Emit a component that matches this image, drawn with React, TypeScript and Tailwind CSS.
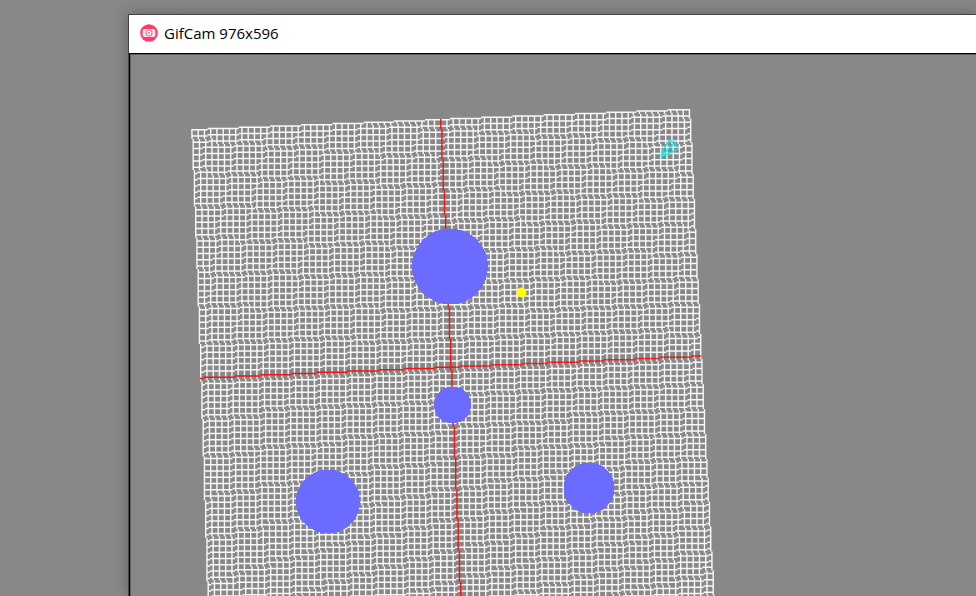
import React from 'react';

type Point = [number, number];

const CELLS = 40;
const UNIT = 1.25;
const LINE = 1.12;

// Maps a grid node (column, row) to a whole display unit, with a slight turn and perspective.
function project(col: number, row: number): Point {
  const u = col / CELLS;
  const v = row / CELLS;
  const x = 321.2 + 10.3 * v + u * (250 + 2 * v + 0.8 * v * v);
  const y = 313 + 248.5 * v + v * v - u * (10.9 + 0.7 * v);
  return [Math.floor(x / UNIT), Math.floor(y / UNIT)];
}

function hEdge([x0, y0]: Point, [x1, y1]: Point): string {
  if (y0 === y1) return `M${x0} ${y0}H${x1 + LINE}V${y0 + LINE}H${x0}Z`;
  const m = Math.floor((x0 + x1) / 2) + 1;
  return `M${x0} ${y0}H${m}V${y0 + LINE}H${x0}ZM${m} ${y1}H${x1 + LINE}V${y1 + LINE}H${m}Z`;
}

function vEdge([x0, y0]: Point, [x1, y1]: Point): string {
  if (x0 === x1) return `M${x0} ${y0}H${x0 + LINE}V${y1 + LINE}H${x0}Z`;
  const m = Math.floor((y0 + y1) / 2) + 1;
  return `M${x0} ${y0}H${x0 + LINE}V${m}H${x0}ZM${x1} ${m}H${x1 + LINE}V${y1 + LINE}H${x1}Z`;
}

function buildGrid() {
  let mesh = '';
  let axes = '';
  let ticks = '';
  for (let r = -CELLS; r <= CELLS; r++) {
    for (let c = -CELLS; c <= CELLS; c++) {
      const p = project(c, r);
      if (c < CELLS) {
        const edge = hEdge(p, project(c + 1, r));
        if (r === 0) axes += edge;
        else mesh += edge;
      }
      if (r < CELLS) {
        const edge = vEdge(p, project(c, r + 1));
        if (c === 0) axes += edge;
        else mesh += edge;
      }
      if (r === 0 && c > 0) ticks += `M${p[0]} ${p[1]}h1v1h-1Z`;
    }
  }
  return { mesh, axes, ticks };
}

const grid = buildGrid();

const bodies = [
  { x: 320, y: 212.5, r: 38 },
  { x: 322.5, y: 351, r: 18.5 },
  { x: 198, y: 447.5, r: 32 },
  { x: 459, y: 434, r: 25.5 },
];

function Simulation() {
  return (
    <svg className="block min-h-0 w-full flex-1" role="img" aria-label="Simulation grid">
      <g transform="scale(1.25)">
        <path d={grid.mesh} fill="#fff" opacity="0.95" />
        <path d={grid.axes} fill="#fa1010" />
        <path d={grid.ticks} fill="#fff" opacity="0.35" />
      </g>
      <g fill="#6b6bff" shapeRendering="crispEdges">
        {bodies.map((b) => (
          <circle key={b.x} cx={b.x} cy={b.y} r={b.r} />
        ))}
      </g>
      <circle cx="391.5" cy="238.5" r="5" fill="#ff0" />
      <path
        d="M531 102.500L534 94L539.500 86.500L545 88.500L547.500 95L541 98.500L531 102.500L543.500 90"
        fill="none"
        stroke="#00f4f4"
        strokeWidth="1.4"
      />
    </svg>
  );
}

function CameraIcon() {
  return (
    <svg className="size-[18px] shrink-0" viewBox="0 0 18 18" aria-hidden="true">
      <circle cx="9" cy="9" r="8.8" fill="#ff3b6b" />
      <rect x="2.6" y="5" width="12.8" height="8" rx="2" fill="#ffe3ea" />
      <circle cx="9" cy="9" r="3" fill="#fff" stroke="#ff6f92" strokeWidth="1.2" />
      <circle cx="9" cy="9" r="1.1" fill="#ff6f92" />
    </svg>
  );
}

export default function App() {
  return (
    <div className="flex h-screen overflow-hidden bg-[#888] pt-3.5 pl-32 font-['Open_Sans','Segoe_UI',sans-serif]">
      <section className="flex min-w-0 flex-1 flex-col border-t border-l border-[#444] shadow-[0_0_14px_rgba(0,0,0,0.3)]">
        <header className="flex h-[38px] shrink-0 items-center gap-1.5 bg-white pb-0.5 pl-[11px]">
          <CameraIcon />
          <h1 className="text-[15px] leading-5 text-black">GifCam 976x596</h1>
        </header>
        <main className="flex min-h-0 flex-1 flex-col border-t border-l border-black bg-[#888] shadow-[inset_1px_1px_0_#5c5c5c]">
          <Simulation />
        </main>
      </section>
    </div>
  );
}
